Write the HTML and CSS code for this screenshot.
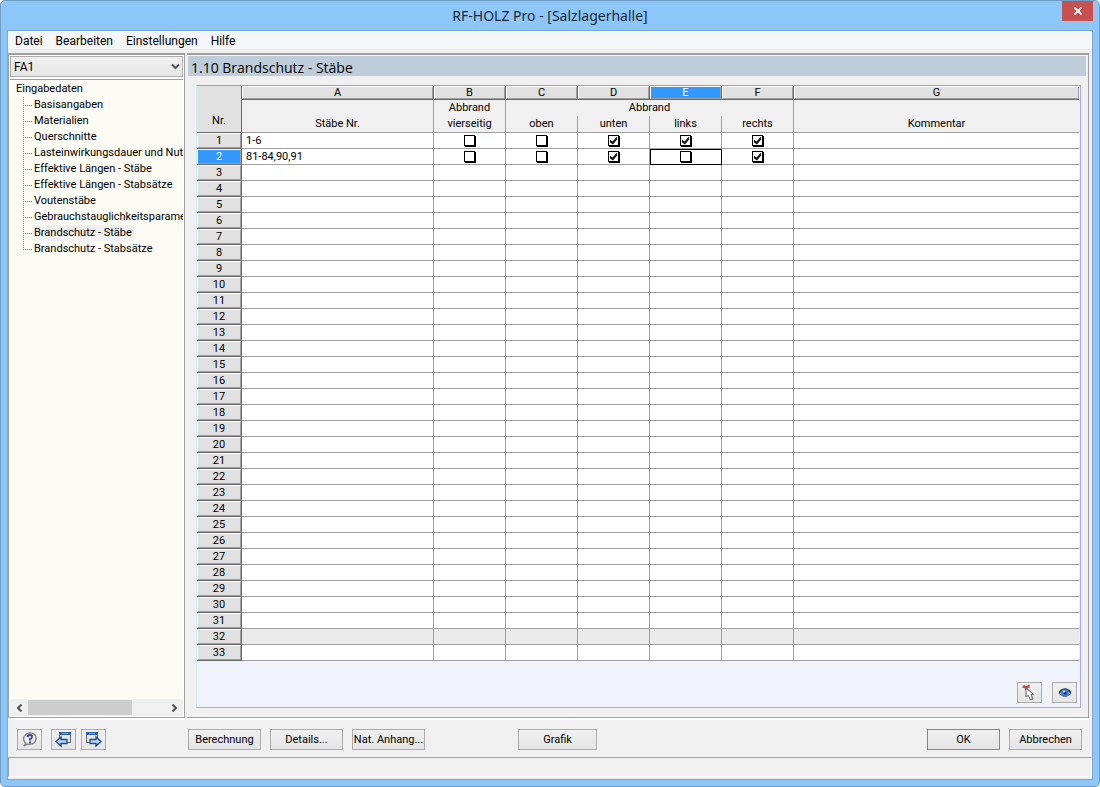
FILE: index.html
```html
<!DOCTYPE html>
<html lang="de">
<head>
<meta charset="utf-8">
<title>RF-HOLZ Pro - [Salzlagerhalle]</title>
<link rel="stylesheet" href="styles.css">
</head>
<body>
<div class="window">
  <header class="titlebar">
    <h1 class="title">RF-HOLZ Pro - [Salzlagerhalle]</h1>
    <button class="close" aria-label="Schließen"><svg width="10" height="8" viewBox="0 0 10 8"><path d="M1.5 0.5L8.500 7.500M8.500 0.500L1.500 7.500" stroke="#fff" stroke-width="1.800"/></svg></button>
  </header>
  <div class="client">
    <nav class="menu">
      <button>Datei</button><button>Bearbeiten</button><button>Einstellungen</button><button>Hilfe</button>
    </nav>
    <div class="panes">
      <aside class="sidebar">
        <div class="combo">
          <select aria-label="Bemessungsfall"><option>FA1</option></select>
          <svg class="combo-arrow" width="9" height="7" viewBox="0 0 9 7"><path d="M1 1.500L4.500 5L8 1.500" fill="none" stroke="#555" stroke-width="2"/></svg>
        </div>
        <div class="tree">
          <a href="#" class="root">Eingabedaten</a>
          <ul>
            <li><a href="#">Basisangaben</a></li>
            <li><a href="#">Materialien</a></li>
            <li><a href="#">Querschnitte</a></li>
            <li><a href="#">Lasteinwirkungsdauer und Nutz</a></li>
            <li><a href="#">Effektive Längen - Stäbe</a></li>
            <li><a href="#">Effektive Längen - Stabsätze</a></li>
            <li><a href="#">Voutenstäbe</a></li>
            <li><a href="#">Gebrauchstauglichkeitsparamet</a></li>
            <li><a href="#" class="current">Brandschutz - Stäbe</a></li>
            <li><a href="#">Brandschutz - Stabsätze</a></li>
          </ul>
        </div>
        <div class="scroll">
          <button aria-label="Nach links"><svg width="7" height="8" viewBox="0 0 7 8"><path d="M5.500 0.500L2 4L5.500 7.500" fill="none" stroke="#505050" stroke-width="2"/></svg></button>
          <div class="track"><div class="thumb"></div></div>
          <button aria-label="Nach rechts"><svg width="7" height="8" viewBox="0 0 7 8"><path d="M1.500 0.500L5 4L1.500 7.500" fill="none" stroke="#505050" stroke-width="2"/></svg></button>
        </div>
      </aside>
      <main class="main">
        <h2 class="heading">1.10 Brandschutz - Stäbe</h2>
        <div class="sheet">
          <table>
            <colgroup><col class="c-nr"><col class="c-a"><col class="c-n"><col class="c-n"><col class="c-n"><col class="c-n"><col class="c-n"><col></colgroup>
            <thead>
              <tr class="letters"><th rowspan="3" class="corner">Nr.</th><th>A</th><th>B</th><th>C</th><th>D</th><th class="on">E</th><th>F</th><th>G</th></tr>
              <tr class="groups"><th></th><th>Abbrand</th><th colspan="4">Abbrand</th><th></th></tr>
              <tr class="names"><th>Stäbe Nr.</th><th>vierseitig</th><th>oben</th><th>unten</th><th>links</th><th>rechts</th><th>Kommentar</th></tr>
            </thead>
            <tbody>
              <tr><th>1</th><td>1-6</td><td><input type="checkbox" aria-label="1 vierseitig"></td><td><input type="checkbox" aria-label="1 oben"></td><td><input type="checkbox" aria-label="1 unten" checked></td><td><input type="checkbox" aria-label="1 links" checked></td><td><input type="checkbox" aria-label="1 rechts" checked></td><td></td></tr>
              <tr><th class="on">2</th><td>81-84,90,91</td><td><input type="checkbox" aria-label="2 vierseitig"></td><td><input type="checkbox" aria-label="2 oben"></td><td><input type="checkbox" aria-label="2 unten" checked></td><td class="cursor"><input type="checkbox" aria-label="2 links"></td><td><input type="checkbox" aria-label="2 rechts" checked></td><td></td></tr>
              <tr><th>3</th><td></td><td></td><td></td><td></td><td></td><td></td><td></td></tr>
              <tr><th>4</th><td></td><td></td><td></td><td></td><td></td><td></td><td></td></tr>
              <tr><th>5</th><td></td><td></td><td></td><td></td><td></td><td></td><td></td></tr>
              <tr><th>6</th><td></td><td></td><td></td><td></td><td></td><td></td><td></td></tr>
              <tr><th>7</th><td></td><td></td><td></td><td></td><td></td><td></td><td></td></tr>
              <tr><th>8</th><td></td><td></td><td></td><td></td><td></td><td></td><td></td></tr>
              <tr><th>9</th><td></td><td></td><td></td><td></td><td></td><td></td><td></td></tr>
              <tr><th>10</th><td></td><td></td><td></td><td></td><td></td><td></td><td></td></tr>
              <tr><th>11</th><td></td><td></td><td></td><td></td><td></td><td></td><td></td></tr>
              <tr><th>12</th><td></td><td></td><td></td><td></td><td></td><td></td><td></td></tr>
              <tr><th>13</th><td></td><td></td><td></td><td></td><td></td><td></td><td></td></tr>
              <tr><th>14</th><td></td><td></td><td></td><td></td><td></td><td></td><td></td></tr>
              <tr><th>15</th><td></td><td></td><td></td><td></td><td></td><td></td><td></td></tr>
              <tr><th>16</th><td></td><td></td><td></td><td></td><td></td><td></td><td></td></tr>
              <tr><th>17</th><td></td><td></td><td></td><td></td><td></td><td></td><td></td></tr>
              <tr><th>18</th><td></td><td></td><td></td><td></td><td></td><td></td><td></td></tr>
              <tr><th>19</th><td></td><td></td><td></td><td></td><td></td><td></td><td></td></tr>
              <tr><th>20</th><td></td><td></td><td></td><td></td><td></td><td></td><td></td></tr>
              <tr><th>21</th><td></td><td></td><td></td><td></td><td></td><td></td><td></td></tr>
              <tr><th>22</th><td></td><td></td><td></td><td></td><td></td><td></td><td></td></tr>
              <tr><th>23</th><td></td><td></td><td></td><td></td><td></td><td></td><td></td></tr>
              <tr><th>24</th><td></td><td></td><td></td><td></td><td></td><td></td><td></td></tr>
              <tr><th>25</th><td></td><td></td><td></td><td></td><td></td><td></td><td></td></tr>
              <tr><th>26</th><td></td><td></td><td></td><td></td><td></td><td></td><td></td></tr>
              <tr><th>27</th><td></td><td></td><td></td><td></td><td></td><td></td><td></td></tr>
              <tr><th>28</th><td></td><td></td><td></td><td></td><td></td><td></td><td></td></tr>
              <tr><th>29</th><td></td><td></td><td></td><td></td><td></td><td></td><td></td></tr>
              <tr><th>30</th><td></td><td></td><td></td><td></td><td></td><td></td><td></td></tr>
              <tr><th>31</th><td></td><td></td><td></td><td></td><td></td><td></td><td></td></tr>
              <tr class="shade"><th>32</th><td></td><td></td><td></td><td></td><td></td><td></td><td></td></tr>
              <tr><th>33</th><td></td><td></td><td></td><td></td><td></td><td></td><td></td></tr>
            </tbody>
          </table>
          <div class="sheet-tools">
            <button class="btn icon" aria-label="Auswählen"><svg width="17" height="17" viewBox="0 0 17 17"><path d="M2.500 1.500L7 6M8.500 1L4 5.500M1.500 3H8.500" stroke="#d24a46" stroke-width="1.800"/><path d="M5 4V13L7.200 11.200L9.500 16L12 14.800L10 10.300H12.500Z" fill="#fff" stroke="#5a5a5a" stroke-width="1"/><path d="M10.500 11L12.500 15L10.500 16Z" fill="#8a8a8a"/></svg></button>
            <button class="btn icon" aria-label="Sichtmodus"><svg width="16" height="16" viewBox="0 0 16 16"><path d="M2 8.500Q8 0.500 14 8.500Q8 14 2 8.500Z" fill="#b9d3ee" stroke="#3d5266" stroke-width="1"/><path d="M2 7.500Q8 0.500 14 7.500" fill="none" stroke="#263849" stroke-width="1.500"/><circle cx="8" cy="8" r="3.800" fill="#3f80dc"/><circle cx="8" cy="8" r="1.500" fill="#0b1f4d"/><circle cx="7" cy="6.500" r="1" fill="#fff"/></svg></button>
          </div>
        </div>
      </main>
    </div>
    <footer class="actions">
      <div class="tools">
        <button class="btn icon help" aria-label="Hilfe"><svg width="17" height="17" viewBox="0 0 18 18"><path d="M3 16L5 12.500Q2 10.500 3 6.500Q5 2 10 2Q16 2.500 16 8Q15.500 14 9 14Q7 14 6.500 13.800Z" fill="#f1f2f6" stroke="#858585" stroke-width="1.500"/><path d="M7 6.500Q7.500 4.200 9.700 4.300Q12 4.500 11.500 6.700Q11 8 9.500 8.500V10" fill="none" stroke="#39448f" stroke-width="2"/><rect x="8.500" y="11" width="2" height="2" fill="#39448f"/></svg></button>
        <button class="btn icon" aria-label="Vorherige Maske"><svg width="17" height="17" viewBox="0 0 17 17"><rect x="4.500" y="1.500" width="11" height="10" fill="#e4e4e2" stroke="#6a6a68"/><rect x="4" y="1" width="12" height="3" fill="#2c5fae"/><path d="M7 2.500H13" stroke="#6fa8ee"/><path d="M1 10.500L6 6V8.500H12V12.500H6V15Z" fill="#b4d8f9" stroke="#24478f" stroke-width="1.300"/></svg></button>
        <button class="btn icon" aria-label="Nächste Maske"><svg width="17" height="17" viewBox="0 0 17 17"><rect x="1.500" y="1.500" width="11" height="10" fill="#e4e4e2" stroke="#6a6a68"/><rect x="1" y="1" width="12" height="3" fill="#2c5fae"/><path d="M4 2.500H10" stroke="#6fa8ee"/><path d="M16 10.500L11 6V8.500H5V12.500H11V15Z" fill="#b4d8f9" stroke="#24478f" stroke-width="1.300"/></svg></button>
      </div>
      <div class="group">
        <button class="btn">Berechnung</button>
        <button class="btn">Details...</button>
        <button class="btn">Nat. Anhang...</button>
      </div>
      <button class="btn wide">Grafik</button>
      <div class="group end">
        <button class="btn default">OK</button>
        <button class="btn">Abbrechen</button>
      </div>
    </footer>
    <div class="status"></div>
  </div>
</div>
</body>
</html>
```

FILE: styles.css
```css
* { box-sizing: border-box; }
html, body { height: 100%; }
body {
  margin: 0;
  background: #fff;
  color: #000;
  font: 11px/16px Roboto, "Liberation Sans", sans-serif;
}
button, select { font: inherit; color: inherit; }
a { color: inherit; text-decoration: none; }
svg { display: block; }

.window {
  display: flex;
  flex-direction: column;
  min-height: 100%;
  padding: 0 6px 6px;
  border: 1px solid #6f9dc6;
  border-radius: 5px;
  background: #8dc7fa;
}
.titlebar {
  display: grid;
  grid-template-columns: 1fr auto 1fr;
  height: 29px;
}
.title {
  grid-column: 2;
  margin: 0;
  font: 14px/30px "Noto Sans", sans-serif;
  color: #1c2733;
}
.close {
  justify-self: end;
  display: grid;
  place-items: center;
  width: 31px;
  height: 20px;
  padding: 0;
  border: 0;
  background: #c75050;
}
.client {
  flex: 1;
  display: flex;
  flex-direction: column;
  border: 1px solid #78a8d4;
  background: #f0f0f0;
}
.menu {
  display: flex;
  gap: 13px;
  height: 19px;
  padding-left: 7px;
  border-bottom: 1px solid #e8e8e8;
  background: #f5f6f8;
  font-size: 12px;
}
.menu button {
  padding: 2px 0 0;
  border: 0;
  background: none;
}

.panes {
  flex: 1;
  display: flex;
  gap: 2px;
  margin-top: 3px;
  padding-right: 3px;
  border-bottom: 2px solid #fff;
}
.sidebar {
  flex: none;
  display: flex;
  flex-direction: column;
  width: 177px;
  padding: 1px;
  border: 1px solid #a0a0a0;
  border-top-width: 2px;
  background: #fff;
}
.combo {
  display: grid;
  align-items: center;
  margin-bottom: 2px;
}
.combo select {
  grid-area: 1 / 1;
  appearance: none;
  width: 100%;
  height: 21px;
  padding: 0 3px;
  border: 1px solid #acacac;
  border-radius: 0;
  background: linear-gradient(#f0f0f0, #e5e5e5);
  font-size: 12px;
}
.combo-arrow {
  grid-area: 1 / 1;
  justify-self: end;
  margin-right: 3px;
  pointer-events: none;
}
.tree {
  flex: 1;
  overflow: hidden;
  padding-top: 1px;
  border-top: 1px solid #a0a0a0;
  background: #fcfcf4;
  white-space: nowrap;
}
.root { display: block; padding-left: 6px; }
.tree ul {
  margin: 0;
  padding: 0 0 0 13px;
  list-style: none;
}
.tree li {
  display: flex;
  background: repeating-linear-gradient(#808080 0 1px, transparent 1px 2px) 0 0 / 1px 100% no-repeat;
}
.tree li:last-child { background-size: 1px 8px; }
.tree li::before {
  content: "";
  flex: none;
  width: 9px;
  height: 1px;
  margin-top: 8px;
  background: repeating-linear-gradient(90deg, #808080 0 1px, transparent 1px 2px);
}
.tree li a { padding: 0 2px; }
.tree .current { background: #f0f0f0; }
.scroll {
  display: flex;
  height: 17px;
  background: #f0f0f0;
}
.scroll button {
  display: grid;
  place-items: center;
  width: 18px;
  padding: 0;
  border: 0;
  background: none;
}
.track { flex: 1; padding: 1px 0; }
.thumb { width: 76%; height: 100%; background: #cdcdcd; }

.main {
  flex: 1;
  display: flex;
  flex-direction: column;
  min-width: 0;
  padding: 1px 2px 9px 1px;
  border: solid #a0a0a0;
  border-width: 2px 1px 1px 0;
}
.heading {
  margin: 0 0 9px;
  padding: 3px 0 0 3px;
  background: #bfccda;
  font: 14px/17px "Open Sans", sans-serif;
}
.sheet {
  flex: 1;
  display: flex;
  flex-direction: column;
  justify-content: space-between;
  margin: 0 5px 0 8px;
  border: 1px solid #a9a9ec;
  border-top-color: #a0a0a0;
  border-left-color: #c8eef2;
  background: #f0f4fa;
}
table {
  width: 100%;
  table-layout: fixed;
  border-collapse: separate;
  border-spacing: 0;
  border-right: 1px solid #f0f0f0;
}
.c-nr { width: 45px; }
.c-a { width: 192px; }
.c-n { width: 72px; }
th, td {
  height: 16px;
  padding: 0;
  border: solid #a0a0a0;
  border-width: 0 1px 1px 0;
  font-weight: normal;
  line-height: 15px;
}
td { padding-left: 4px; background: #fff; }
td:has(input) { padding: 0; }
td:last-child, tr > th:last-child { border-right-width: 0; }
.letters th {
  height: 14px;
  border-color: #696969;
  background: #e1e1e1;
  box-shadow: inset 1px 1px #fff, inset -1px -1px #a0a0a0;
  line-height: 13px;
}
.letters .corner {
  padding-top: 22px;
  box-shadow: none;
}
.groups th, .names th {
  padding-bottom: 1px;
  background: #f0f0f0;
  line-height: 14px;
}
.groups th { border-bottom: 0; }
.names th { height: 17px; }
tbody th {
  border-color: #696969;
  background: #e1e1e1;
  box-shadow: inset 1px 1px #fff, inset -1px -1px #a0a0a0;
}
.letters .on, tbody .on { background: #3399ff; color: #fff; }
.shade td { background: #ebebeb; }
.cursor { outline: 1px solid #000; outline-offset: -1px; }
input[type="checkbox"] {
  appearance: none;
  display: block;
  width: 11px;
  height: 11px;
  margin: 0 auto;
  border: 1px solid #000;
  background: #fff;
  box-shadow: 1px 1px #000;
}
input:checked::before {
  content: "";
  display: block;
  width: 9px;
  height: 9px;
  background: #111;
  clip-path: polygon(10% 40%, 40% 62%, 85% 8%, 92% 36%, 44% 94%, 10% 70%);
}
.sheet-tools {
  display: flex;
  justify-content: flex-end;
  gap: 10px;
  padding: 0 3px 4px;
}

.btn {
  min-width: 73px;
  height: 21px;
  padding: 1px 0 0;
  border: 1px solid #acacac;
  background: linear-gradient(#f0f0f0, #e5e5e5);
  line-height: 18px;
}
.btn.icon {
  display: grid;
  place-items: center;
  min-width: 25px;
  padding: 0;
}
.btn.wide { min-width: 79px; }
.btn.default { border-color: #3399ff; }
.actions {
  display: flex;
  padding: 9px 10px 7px 9px;
}
.tools {
  display: flex;
  gap: 5px;
  width: 171px;
}
.help { margin-right: 4px; }
.group { display: flex; gap: 9px; }
.wide { margin-left: 93px; }
.end { margin-left: auto; }
.status {
  height: 20px;
  margin-bottom: 2px;
  border: 1px solid #a0a0a0;
  border-right-color: #fff;
  border-bottom-color: #fff;
}
```
